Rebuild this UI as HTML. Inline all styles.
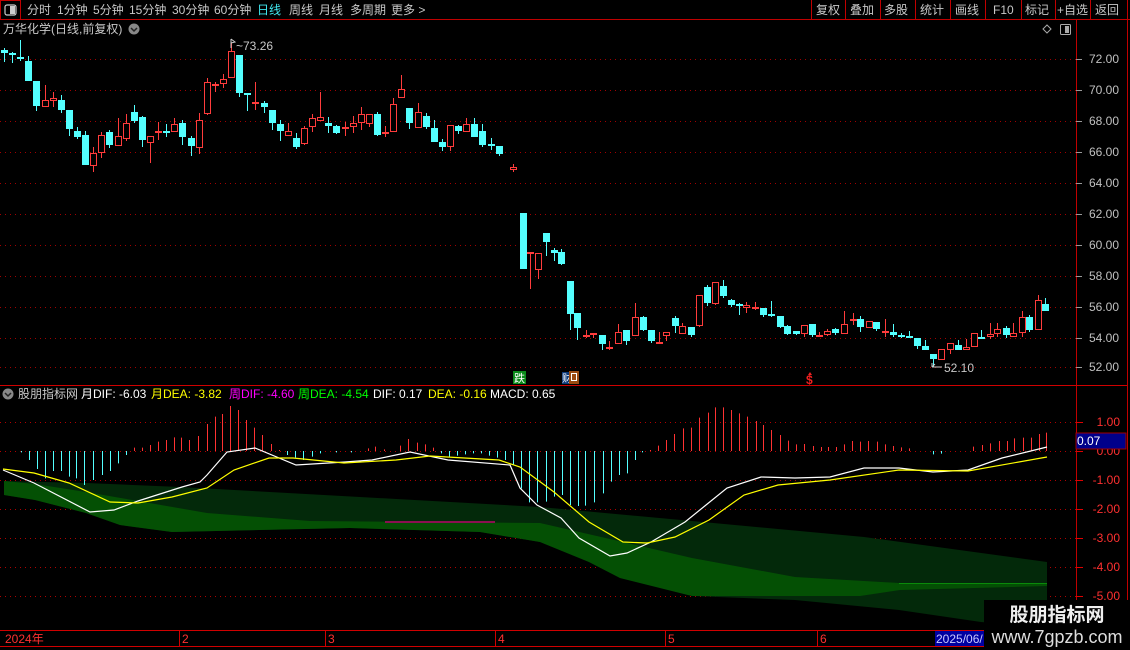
<!DOCTYPE html>
<html><head><meta charset="utf-8">
<style>
*{margin:0;padding:0}
body{width:1130px;height:650px;background:#000;overflow:hidden;font-family:"Liberation Sans","Noto Sans CJK SC",sans-serif;position:relative}
svg{position:absolute;left:0;top:0}
svg text{font-family:"Liberation Sans","Noto Sans CJK SC",sans-serif}
.wm{position:absolute;left:984px;top:600px;width:146px;height:50px;background:#000;color:#eee;text-align:center}
.wm .a{font-size:19px;font-weight:bold;line-height:24px;margin-top:2px;font-family:"Noto Sans CJK SC",sans-serif}
.wm .b{font-size:18px;line-height:22px;color:#ddd}
</style></head><body>
<svg id="s" width="1130" height="650" xmlns="http://www.w3.org/2000/svg">
<g font-size="12" fill="#c8c8c8">
<rect x="0.5" y="0.5" width="20" height="19" fill="none" stroke="#c00000"/>
<rect x="5" y="5" width="11" height="10" rx="2" fill="none" stroke="#ccc" stroke-width="1.2"/><rect x="10" y="6" width="5" height="8" fill="#ccc"/>
<line x1="0" y1="19.5" x2="1130" y2="19.5" stroke="#c00000"/>
<text x="27" y="14">分时</text><text x="57" y="14">1分钟</text><text x="93" y="14">5分钟</text><text x="129" y="14">15分钟</text><text x="172" y="14">30分钟</text><text x="214" y="14">60分钟</text>
<text x="257" y="14" fill="#40e8f0">日线</text><text x="289" y="14">周线</text><text x="319" y="14">月线</text><text x="350" y="14">多周期</text><text x="391" y="14">更多 &gt;</text>
<g stroke="#c00000"><line x1="811.5" y1="0" x2="811.5" y2="20"/><line x1="845.5" y1="0" x2="845.5" y2="20"/><line x1="880.5" y1="0" x2="880.5" y2="20"/><line x1="915.5" y1="0" x2="915.5" y2="20"/><line x1="950.5" y1="0" x2="950.5" y2="20"/><line x1="985.5" y1="0" x2="985.5" y2="20"/><line x1="1021.5" y1="0" x2="1021.5" y2="20"/><line x1="1055.5" y1="0" x2="1055.5" y2="20"/><line x1="1090.5" y1="0" x2="1090.5" y2="20"/><line x1="1127.5" y1="0" x2="1127.5" y2="650"/><line x1="1076.5" y1="20" x2="1076.5" y2="630"/></g>
<text x="816" y="14">复权</text><text x="850" y="14">叠加</text><text x="884" y="14">多股</text><text x="920" y="14">统计</text><text x="955" y="14">画线</text><text x="993" y="14">F10</text><text x="1025" y="14">标记</text><text x="1057" y="14">+自选</text><text x="1095" y="14">返回</text>
<text x="3" y="33">万华化学(日线,前复权)</text>
<circle cx="134" cy="29" r="5.5" fill="#888"/><path d="M131 28 l3 3 l3 -3" stroke="#222" stroke-width="1.5" fill="none"/>
<path d="M1047 25 l4 4 l-4 4 l-4 -4z" fill="none" stroke="#aaa"/>
<rect x="1060.5" y="24.5" width="10" height="10" rx="1" fill="none" stroke="#aaa"/><rect x="1065" y="26" width="4" height="7" fill="#aaa"/>
</g>
<g id="grid"></g><g id="cand"></g><g id="macd"></g>
<g font-size="12" fill="#c8c8c8">
<path d="M231 48 v-9 m0 0 l4 3 l-4 1" stroke="#ccc" fill="none"/><text x="236" y="50">~73.26</text>
<path d="M932 367 h10 M932 367 l3 -3 M932 367 l0 -4" stroke="#ccc" fill="none"/><text x="944" y="372">52.10</text>
</g>
<rect x="513" y="371" width="13" height="13" fill="#0a8a1a"/><text x="514" y="382" font-size="11" fill="#fff">跌</text>
<rect x="562" y="372" width="7" height="12" fill="#0c3a7a"/><text x="562" y="382" font-size="10" fill="#fff">财</text>
<rect x="569" y="371" width="10" height="13" fill="#9a4a10"/><rect x="571.5" y="373.5" width="5" height="7" fill="none" stroke="#fff"/>
<text x="806" y="384" font-size="12" fill="#f02020" font-weight="bold">$</text><path d="M810 372 l-2 3 h4z" fill="#f02020"/>
<line x1="0" y1="385.5" x2="1076" y2="385.5" stroke="#d00000"/>
<line x1="1076" y1="385.5" x2="1127" y2="385.5" stroke="#d00000"/>
<g font-size="12">
<circle cx="8" cy="394" r="5.5" fill="#888"/><path d="M5 393 l3 3 l3 -3" stroke="#222" stroke-width="1.5" fill="none"/>
<text x="18" y="398" fill="#c8c8c8">股朋指标网</text>
<text x="81" y="398" fill="#fff">月DIF: -6.03</text>
<text x="151" y="398" fill="#ffff00">月DEA: -3.82</text>
<text x="229" y="398" fill="#ff00ff">周DIF: -4.60</text>
<text x="298" y="398" fill="#00ff00">周DEA: -4.54</text>
<text x="373" y="398" fill="#fff">DIF: 0.17</text>
<text x="428" y="398" fill="#ffff00">DEA: -0.16</text>
<text x="490" y="398" fill="#fff">MACD: 0.65</text>
</g>
<g id="axis" font-size="12"></g>
<rect x="1076" y="433" width="50" height="16" fill="#00008a" stroke="#a00000"/><text x="1077" y="445" font-size="12" fill="#fff">0.07</text>
<g stroke="#d00000"><line x1="0" y1="630.5" x2="1076" y2="630.5"/><line x1="0" y1="646.5" x2="1076" y2="646.5"/></g>
<g id="dates" font-size="12" fill="#ff3030"></g>
<rect x="935" y="631" width="49" height="15" fill="#0000a0"/><text x="936" y="643" font-size="12" fill="#c8c8ff">2025/06/</text>
</svg>
<div class="wm"><div class="a">股朋指标网</div><div class="b">www.7gpzb.com</div></div>
<script>
const NS="http://www.w3.org/2000/svg";
function el(p,t,a,txt){const e=document.createElementNS(NS,t);for(const k in a)e.setAttribute(k,a[k]);if(txt!=null)e.textContent=txt;document.getElementById(p).appendChild(e);return e;}
// grid
const py=[[59,"72.00"],[90,"70.00"],[121,"68.00"],[152,"66.00"],[183,"64.00"],[214,"62.00"],[245,"60.00"],[276,"58.00"],[307,"56.00"],[338,"54.00"],[367,"52.00"]];
py.forEach(([y,t])=>{el("grid","line",{x1:0,y1:y+.5,x2:1076,y2:y+.5,stroke:"#a00000","stroke-dasharray":"1 4"});el("axis","line",{x1:1076,y1:y+.5,x2:1082,y2:y+.5,stroke:"#999"});el("axis","text",{x:1089,y:y+4,fill:"#c0c0c0"},t);});
const my=[[422,"1.00"],[451,"0.00"],[480,"-1.00"],[509,"-2.00"],[538,"-3.00"],[567,"-4.00"],[596,"-5.00"]];
my.forEach(([y,t])=>{el("grid","line",{x1:0,y1:y+.5,x2:1076,y2:y+.5,stroke:"#b00000","stroke-dasharray":"1 4"});el("axis","line",{x1:1076,y1:y+.5,x2:1083,y2:y+.5,stroke:"#e00000"});el("axis","text",{x:1120,y:y+4,fill:"#ff3030","text-anchor":"end"},t);});
[[5,"2024年"],[182,"2"],[328,"3"],[498,"4"],[668,"5"],[820,"6"]].forEach(([x,t],i)=>{el("dates","text",{x:x,y:643},t);if(i)el("dates","line",{x1:x-2.5,y1:630,x2:x-2.5,y2:646,stroke:"#d00000"});});
// candles: [x, bodyTop, bodyBot, hi, lo, red?]
const c1=[[4,50,53,48,62,0],[12,53,54,52,63,0],[20,57,58,40,61,0],[28,61,81,56,81,0],[36,81,106,81,111,0],[44,100,107,85,107,1],[52,98,101,92,107,1],[60,100,110,95,113,0],[68,110,129,110,136,0],[76,131,137,127,139,0],[84,135,165,131,165,0],[92,153,166,147,172,1],[100,135,153,132,158,1],[108,132,145,130,148,0],[116,136,146,118,146,1],[124,123,139,114,141,1],[132,112,121,105,123,0],[140,117,140,116,147,0],[148,136,143,136,163,1],[156,131,132,122,140,1],[164,131,132,124,137,0],[172,124,132,118,132,1],[180,123,137,120,145,0],[188,138,146,136,156,0],[196,120,148,113,154,1],[204,82,114,78,115,1],[212,84,86,82,92,1],[220,79,84,74,88,1],[228,51,78,43,78,1],[236,55,93,55,97,0],[244,93,94,93,111,0],[252,102,103,82,110,1],[260,103,107,101,113,0],[268,110,123,110,130,0],[276,124,131,120,141,0],[284,131,136,123,136,1],[292,138,147,133,149,0],[300,128,144,126,145,1],[308,118,127,114,132,1],[316,117,121,92,121,1],[324,123,126,117,133,0],[332,126,133,125,134,0],[340,127,128,122,136,1],[348,123,127,116,133,1],[356,114,123,107,130,1],[364,114,124,114,127,1],[372,114,135,112,136,0],[380,132,133,126,137,1],[388,104,132,98,132,1],[396,89,98,75,98,1],[404,108,123,108,129,0],[412,112,128,103,128,1],[420,116,127,113,129,0],[428,128,142,120,142,0],[436,142,147,139,151,0],[444,125,147,125,151,1],[452,126,131,125,134,0],[460,124,132,118,132,1],[468,124,137,118,137,0],[476,131,145,124,147,0],[484,144,145,138,150,0],[492,146,154,146,156,0]];
c1.forEach(c=>c[0]=c[0]*3/2.96);
c1.push([513,167,170,164,172,1]);
const c2=[[521,213,269,213,269,0],[528,252,253,252,289,1],[535,253,270,253,279,1],[543,233,242,233,256,0],[550,250,253,248,261,0],[557,252,264,249,265,0],[565,281,314,281,330,0],[572,313,328,313,340,0],[580,335,337,330,338,1],[587,333,335,333,338,1],[595,335,344,335,350,0],[602,347,349,341,350,1],[610,332,344,324,344,1],[618,330,341,330,345,0],[626,317,336,303,336,1],[633,317,330,316,331,0],[641,330,341,330,343,0],[648,342,343,332,344,1],[655,332,336,332,341,1],[663,318,326,316,333,0],[670,326,334,323,334,1],[678,327,335,327,337,0],[686,295,326,295,327,1],[693,287,303,285,306,0],[701,282,304,282,305,1],[708,286,296,280,298,0],[716,300,305,299,307,0],[723,304,305,303,315,0],[730,305,308,302,313,1],[738,307,309,302,310,1],[745,308,315,308,317,0],[753,314,316,301,317,0],[761,316,327,316,328,0],[768,326,334,325,335,0],[776,331,334,331,335,0],[784,325,334,325,337,1],[791,324,335,324,337,0],[798,335,336,332,337,1],[805,331,335,329,336,1],[813,329,333,328,335,0],[821,324,334,311,334,1],[829,319,321,313,325,1],[836,319,327,316,332,0],[844,321,328,321,328,1],[851,322,329,322,331,0],[859,331,333,319,337,1],[867,332,335,324,337,0],[874,335,336,333,338,0],[882,336,337,331,338,0],[889,338,346,338,349,0],[897,346,350,340,350,0],[904,354,359,354,367,0],[912,349,360,349,360,1],[920,343,350,343,354,1],[927,345,350,340,350,0],[935,347,350,339,350,1],[942,333,347,333,347,1],[949,337,338,330,338,0],[957,334,337,323,339,1],[964,329,334,323,337,1],[972,328,335,326,338,0],[979,333,337,323,337,1],[987,317,333,311,337,1],[994,317,330,315,332,0],[1002,300,330,295,330,1],[1009,304,311,298,311,0]];
c2.forEach(c=>c[0]=500+(c[0]-500)*2.8/2.8);
// re-map second group x using zoom scale (listed x derived with /3, true /2.8)
c2.forEach(c=>c[0]=500+(c[0]-500)*3/2.8);
[...c1,...c2].forEach(([x,t,b,h,l,r])=>{
 x=Math.round(x);const col=r?"#ff3c3c":"#54ffff";
 el("cand","line",{x1:x+.5,y1:h,x2:x+.5,y2:l,stroke:col});
 if(b-t<2){el("cand","rect",{x:x-3,y:t,width:7,height:Math.max(2,b-t),fill:col});}
 else if(r){el("cand","rect",{x:x-2.5,y:t+.5,width:6,height:b-t-1,fill:"#000",stroke:col});}
 else el("cand","rect",{x:x-3,y:t,width:7,height:b-t,fill:col});
});
// MACD
const Z8=p=>[p[0]/2.904,395+p[1]/3], Z9=p=>[520+p[0]/2.904,395+p[1]/3];
const pts=a=>a.map(p=>p[0].toFixed(1)+","+p[1].toFixed(1)).join(" ");
el("macd","polygon",{points:pts([[4,481],[86,483],[180,487],[360,497],[540,507],[692,521],[864,537],[1047,562],[1047,628],[981,622],[899,610],[795,600],[692,596],[620,578],[589,562],[540,542],[480,532],[350,528],[172,532],[120,525],[86,513],[35,500],[4,495]]),fill:"#03290a"});
el("macd","polygon",{points:pts([[4,481],[35,484],[86,492],[138,501],[207,513],[310,521],[430,522],[540,523],[623,542],[692,558],[795,577],[899,583],[1047,583],[1047,586],[900,590],[860,596],[692,596],[620,578],[589,562],[540,542],[480,532],[350,528],[172,532],[120,525],[86,513],[35,500],[4,495]]),fill:"#045004"});
el("macd","line",{x1:899,y1:583.5,x2:1047,y2:583.5,stroke:"#0a8a0a"});
el("macd","line",{x1:385,y1:522,x2:495,y2:522,stroke:"#8a1050","stroke-width":2});
const h8=[[60,172,0],[83,195,0],[107,222,0],[130,250,0],[153,228,0],[176,228,0],[199,245,0],[222,250,0],[245,270,0],[270,255,0],[295,240,0],[318,228,0],[342,205,0],[365,180,0],[388,158,1],[411,158,1],[435,150,1],[458,140,1],[481,135,1],[504,127,1],[527,128,1],[550,135,1],[576,123,1],[600,87,1],[623,65,1],[646,57,1],[669,33,1],[692,45,1],[715,75,1],[739,98,1],[762,120,1],[786,147,1],[809,165,1],[834,180,0],[858,188,0],[881,195,0],[905,185,0],[928,175,0],[975,172,0],[1020,172,0],[1068,160,1],[1090,155,1],[1114,163,1],[1162,152,1],[1186,132,1],[1210,143,1],[1233,148,1],[1256,158,1],[1280,175,0],[1304,185,0],[1328,182,0],[1350,178,0],[1373,175,0],[1396,175,0],[1420,182,0],[1443,188,0],[1467,195,0],[1490,210,0],[1514,280,0],[1537,322,0]];
const h9=[[4,280,0],[27,310,0],[50,322,0],[75,320,0],[98,305,0],[121,300,0],[144,330,0],[167,333,0],[190,332,0],[215,322,0],[240,295,0],[263,260,0],[287,240,0],[310,235,0],[333,195,0],[355,172,0],[378,165,1],[402,152,1],[425,135,1],[448,117,1],[472,100,1],[497,98,1],[521,68,1],[545,53,1],[567,37,1],[590,37,1],[614,45,1],[637,55,1],[660,65,1],[684,78,1],[707,90,1],[730,105,1],[754,120,1],[779,137,1],[802,148,1],[826,147,1],[850,153,1],[873,156,1],[895,156,1],[919,156,1],[942,148,1],[965,138,1],[988,140,1],[1012,138,1],[1036,140,1],[1060,148,1],[1084,153,1],[1107,157,1],[1131,160,1],[1200,178,0],[1222,176,0],[1316,155,1],[1341,150,1],[1366,145,1],[1390,138,1],[1413,138,1],[1436,130,1],[1460,128,1],[1483,128,1],[1506,117,1],[1528,113,1]];
const bar=(f,a)=>a.forEach(h=>{const[x,y]=f([h[0],h[1]]);const xx=Math.round(x)+.5;el("macd","line",{x1:xx,y1:451,x2:xx,y2:y,stroke:h[2]?"#ff3232":"#54ffff"});});
bar(Z8,h8);bar(Z9,h9);
const wh=[[3,470],[34,483],[90,512],[114,510],[138,501],[182,487],[200,482],[207,475],[227,452],[255,448],[296,465],[345,462],[372,460],[410,452],[448,460],[510,465],[520,488],[537,505],[561,518],[579,538],[610,556],[627,553],[651,542],[685,522],[706,505],[727,488],[761,477],[795,478],[830,477],[864,468],[899,468],[933,472],[968,470],[1002,458],[1047,447]];
const ye=[[3,469],[34,473],[69,483],[110,502],[138,503],[172,497],[207,488],[234,470],[269,458],[293,458],[344,463],[396,460],[430,456],[499,460],[520,467],[554,492],[589,522],[623,542],[647,543],[675,537],[709,520],[744,495],[778,485],[830,480],[899,470],[968,471],[1047,457]];
el("macd","polyline",{points:pts(wh),fill:"none",stroke:"#fff","stroke-width":1.2});
el("macd","polyline",{points:pts(ye),fill:"none",stroke:"#ffff00","stroke-width":1.2});
</script>
</body></html>
